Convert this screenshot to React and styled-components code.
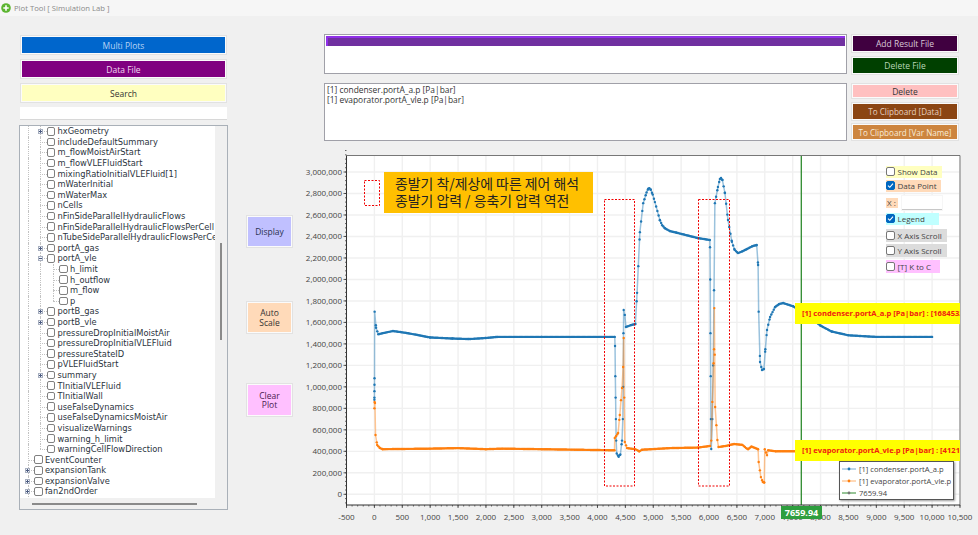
import React from 'react'
import styled, { createGlobalStyle } from 'styled-components'

const GlobalStyle = createGlobalStyle`
    html, body {
        margin: 0;
        padding: 0;
        background: #f0f0f0;
    }
    * {
        box-sizing: border-box;
    }
`

const uiFont = '"Open Sans", "Noto Sans", sans-serif'

const Page = styled.div`
    width: 978px;
    height: 535px;
    overflow: hidden;
    background: #f0f0f0;
    font-family: ${uiFont};
    font-size: 8.5px;
    color: #333;
`

const TitleBar = styled.div`
    height: 16px;
    display: flex;
    align-items: center;
    gap: 3px;
    padding-left: 1px;
    background: #f6f6f6;
    color: #8a8a8a;
    font-size: 7.7px;
`

const Content = styled.div`
    display: flex;
    padding-left: 19px;
`

const Sidebar = styled.div`
    width: 209px;
    padding-top: 20px;
    display: flex;
    flex-direction: column;
`

const FlatButton = styled.div`
    display: flex;
    align-items: center;
    justify-content: center;
    text-align: center;
    background: ${p => p.$bg};
    color: ${p => p.$fg};
    height: ${p => p.$h}px;
    border: 1px solid #fbfbfb;
    box-shadow: 0 0 0 1px #e2e2e2;
`

const SideButton = styled(FlatButton)`
    margin: 0 2px 0 2px;
    margin-bottom: ${p => p.$after}px;
    font-size: 8.5px;
`

const SearchInput = styled.div`
    height: 13px;
    margin: 0 1px 5px 1px;
    background: #fff;
    border-bottom: 1px solid #d8d8d8;
`

const TreeFrame = styled.div`
    position: relative;
    height: 385px;
    border: 1px solid #a9b0b8;
    background: #f0f0f0;
    overflow: hidden;
`

const TreeBody = styled.div`
    width: 195px;
    height: 372px;
    padding-left: 1.7px;
    background: #fff;
    overflow: hidden;
`

const TreeRowBox = styled.div`
    display: flex;
    align-items: center;
    height: 10.6px;
    white-space: nowrap;
    font-family: "DejaVu Sans", sans-serif;
    font-size: 8.3px;
    color: #2b3440;
`

const Guide = styled.span`
    position: relative;
    flex: 0 0 12.6px;
    height: 100%;
    &::before {
        content: '';
        position: absolute;
        left: 6px;
        top: 0;
        height: ${p => (p.$half ? '50%' : '100%')};
        border-left: 1px dotted #c2c2c2;
    }
    &::after {
        content: '';
        display: ${p => (p.$branch ? 'block' : 'none')};
        position: absolute;
        left: 6px;
        right: 0;
        top: 50%;
        border-top: 1px dotted #c2c2c2;
    }
`

const Toggle = styled.span`
    position: absolute;
    z-index: 1;
    left: 3.5px;
    top: 3px;
    width: 5px;
    height: 5px;
    border: 1px solid #a8b0c0;
    background: #f4f6fa;
    &::before {
        content: '';
        position: absolute;
        left: 0;
        right: 0;
        top: 1px;
        border-top: 1px solid #4a5a80;
    }
    &::after {
        content: '';
        display: ${p => (p.$open ? 'none' : 'block')};
        position: absolute;
        top: 0;
        bottom: 0;
        left: 1px;
        border-left: 1px solid #4a5a80;
    }
`

const TreeBox = styled.span`
    flex: 0 0 8.6px;
    height: 8.6px;
    margin-right: 2px;
    border: 1px solid #808080;
    border-radius: 2px;
    background: #fff;
`

const VScroll = styled.div`
    position: absolute;
    left: 199.5px;
    top: 117px;
    width: 2px;
    height: 97px;
    background: #8a8a8a;
`

const HScroll = styled.div`
    position: absolute;
    left: 12px;
    top: 377px;
    width: 165px;
    height: 2px;
    background: #8a8a8a;
`

const ActionColumn = styled.div`
    width: 45px;
    margin-left: 19px;
    padding-top: 200px;
    display: flex;
    flex-direction: column;
`

const ActionButton = styled(FlatButton)`
    margin-bottom: ${p => p.$after}px;
    font-size: 8.5px;
    line-height: 9.5px;
`

const RightColumn = styled.div`
    width: 678px;
    margin-left: 8px;
`

const TopPanel = styled.div`
    padding: 18px 0 9px 24px;
    display: flex;
    flex-direction: column;
    gap: 9px;
`

const TopRow = styled.div`
    display: flex;
    gap: 5px;
`

const ListBox = styled.div`
    width: 523px;
    height: ${p => p.$h}px;
    padding: 1px 2px;
    background: #fff;
    border: 1px solid #a0a0a8;
    font-size: 8.4px;
    line-height: 9.5px;
    color: #333;
`

const SelectedItem = styled.div`
    height: 10px;
    margin: 0 -1px;
    border-left: 2.5px solid #9030e8;
    background: linear-gradient(#9030e8 0 2px, #7030a0 2px);
`

const TopButtons = styled.div`
    width: 106px;
    display: flex;
    flex-direction: column;
    padding-top: ${p => p.$top}px;
`

const TopButton = styled(FlatButton)`
    margin-bottom: ${p => p.$after}px;
    font-size: ${p => p.$size || 8.5}px;
    white-space: nowrap;
`

const ChartArea = styled.div`
    position: relative;
    width: 678px;
    height: 385px;
`

const ChartNote = styled.div`
    position: absolute;
    left: 84px;
    top: 22px;
    width: 209px;
    height: 41px;
    padding: 3px 0 0 11px;
    background: #ffc000;
    color: #222;
    font-family: "Noto Sans CJK KR", sans-serif;
    font-size: 13.9px;
    line-height: 17px;
    white-space: nowrap;
`

const ValueTag = styled.div`
    position: absolute;
    left: 495px;
    top: ${p => p.$top}px;
    width: 165px;
    height: 21px;
    padding-left: 7px;
    overflow: hidden;
    background: #ffff00;
    color: #f02010;
    font-size: 7.6px;
    font-weight: 700;
    line-height: 21px;
    white-space: nowrap;
`

const CursorTag = styled.div`
    position: absolute;
    left: 481px;
    top: 356px;
    width: 41px;
    height: 13px;
    background: #2e9e3e;
    color: #fff;
    font-size: 9px;
    font-weight: 700;
    line-height: 13px;
    text-align: center;
`

const LegendBox = styled.div`
    position: absolute;
    left: 539px;
    top: 311px;
    width: 115px;
    height: 39px;
    padding: 1px 0 0 2px;
    display: flex;
    flex-direction: column;
    justify-content: space-around;
    background: #fff;
    border: 1px solid #555;
    box-shadow: 1px 1px 2px #999;
    font-size: 7.6px;
    color: #444;
`

const LegendItem = styled.div`
    display: flex;
    align-items: center;
    gap: 3px;
    white-space: nowrap;
`

const OptionPanel = styled.div`
    position: absolute;
    left: 585.5px;
    top: 15.5px;
    display: flex;
    flex-direction: column;
    align-items: flex-start;
    font-size: 8px;
    color: #444;
`

const OptionRow = styled.div`
    display: flex;
    align-items: center;
    gap: 3px;
    width: ${p => p.$w}px;
    height: ${p => p.$h || 12}px;
    margin-bottom: ${p => p.$after}px;
    background: ${p => p.$bg};
    white-space: nowrap;
`

const OptionBox = styled.span`
    flex: 0 0 9px;
    height: 9px;
    border: 1px solid ${p => (p.$on ? '#0067c0' : '#777')};
    border-radius: 2px;
    background: ${p => (p.$on ? '#0067c0' : '#fff')};
    display: flex;
    align-items: center;
    justify-content: center;
`

const XRow = styled.div`
    display: flex;
    align-items: center;
    gap: 4px;
    margin-bottom: 3px;
`

const XLabel = styled.span`
    width: 12px;
    height: 10px;
    background: #ffdab9;
    line-height: 10px;
    text-align: center;
`

const XInput = styled.div`
    width: 40px;
    height: 14px;
    background: #fff;
    border-bottom: 1px solid #c8c8c8;
    box-shadow: 0 0 0 1px #f6f6f6;
`

// chart scales, page coordinates minus chart origin (300, 150)
const plot = { left: 46.5, top: 5.5, right: 660, bottom: 355 }
const sx = t => 74.4 + t * 0.05577
const sy = v => 344.3 - v * 1.0743e-4

const condenser = [
    [0, 880000], [0.5, 900000], [1, 960000], [1.5, 1020000], [2, 1080000], [4, 1700000], [30, 1550000], [70, 1490000],
    [150, 1500000], [333, 1520000], [600, 1500000], [1000, 1460000], [1400, 1450000], [1700, 1445000], [2000, 1455000],
    [2200, 1465000], [3000, 1465000], [4310, 1465000], [4315, 1380000], [4320, 1100000], [4325, 900000], [4330, 700000],
    [4335, 500000], [4345, 380000], [4380, 350000], [4410, 370000], [4440, 500000], [4455, 700000],
    [4462, 1000000], [4466, 1500000], [4470, 1715000], [4490, 1670000], [4510, 1557000], [4600, 1575000],
    [4680, 1585000], [4710, 1875000], [4760, 2440000], [4820, 2710000], [4880, 2810000], [4910, 2845000], [4930, 2850000],
    [4955, 2835000], [4990, 2790000], [5030, 2720000], [5120, 2550000], [5160, 2505000], [5210, 2476000], [5300, 2450000],
    [5420, 2435000], [5800, 2385000], [6015, 2367000], [6018, 2300000], [6022, 2000000], [6026, 1500000], [6030, 1100000],
    [6034, 700000], [6040, 421000], [6060, 700000], [6075, 1200000], [6090, 1900000], [6105, 2710000], [6160, 2860000],
    [6195, 2935000], [6215, 2945000], [6240, 2925000], [6285, 2805000], [6340, 2553000], [6410, 2350000], [6460, 2275000],
    [6520, 2245000], [6600, 2262000], [6680, 2283000], [6780, 2310000], [6855, 2320000], [6880, 2135000], [6890, 1700000],
    [6915, 1232000], [6950, 1157000], [6985, 1166000], [7010, 1350000], [7040, 1530000], [7095, 1650000], [7185, 1744000],
    [7260, 1772000], [7330, 1780000], [7510, 1750000], [7800, 1650000], [8000, 1570000], [8200, 1515000], [8500, 1480000],
    [9000, 1465000], [10000, 1465000],
]

const evaporator = [
    [0, 800000], [3, 860000], [10, 850000], [20, 552000], [50, 459000], [100, 430000], [150, 420000],
    [1000, 425000], [1500, 430000], [2000, 420000], [2300, 425000], [3000, 420000], [4000, 412000],
    [4305, 410000], [4310, 524000], [4370, 570000], [4400, 738000], [4440, 990000], [4460, 1185000],
    [4470, 1455000], [4480, 900000], [4490, 487000], [4530, 430000], [4680, 420000], [4750, 400000],
    [4800, 415000], [5300, 430000], [5800, 435000], [6020, 450000], [6040, 500000], [6060, 860000],
    [6090, 1350000], [6095, 1733000], [6102, 1300000], [6110, 813000], [6150, 505000], [6170, 440000],
    [6300, 450000], [6450, 468000], [6600, 460000], [6665, 430000], [6700, 420000], [6760, 445000],
    [6880, 420000], [6890, 300000], [6930, 160000], [6965, 115000], [6990, 110000], [7000, 420000],
    [7040, 365000], [7060, 410000], [7200, 400000], [10000, 410000],
]

// markers every `step` of time along a polyline, plus the vertices
const sample = (points, step) => {
    const out = []
    for (let i = 0; i < points.length - 1; i++) {
        const [t0, v0] = points[i]
        const [t1, v1] = points[i + 1]
        out.push([t0, v0])
        for (let t = t0 + step; t < t1; t += step) {
            out.push([t, v0 + (v1 - v0) * (t - t0) / (t1 - t0)])
        }
    }
    out.push(points[points.length - 1])
    return out
}

const toPath = points => points.map(([t, v]) => `${sx(t).toFixed(2)},${sy(v).toFixed(2)}`).join(' ')
const fmt = n => n.toLocaleString('en-US')
const range = (from, to, step) => {
    const out = []
    for (let v = from; v <= to; v += step) out.push(v)
    return out
}

const xMajor = range(-500, 10500, 500)
const xMinor = range(-500, 10500, 100)
const yMajor = range(0, 3000000, 200000)
const yMinor = range(-80000, 3200000, 40000)

const Series = ({ points, color }) => (
    <g>
        <polyline points={toPath(points)} fill="none" stroke={color} strokeOpacity="0.45" strokeWidth="1.5" />
        {sample(points, 22).map(([t, v], i) => (
            <circle key={i} cx={sx(t)} cy={sy(v)} r="1.2" fill={color} />
        ))}
    </g>
)

const NoteFrame = ({ x, y, w, h }) => (
    <rect x={x} y={y} width={w} height={h} fill="none" stroke="#f00000" strokeWidth="1" strokeDasharray="2 1.5" />
)

const Chart = () => (
    <svg width="678" height="385" style={{ display: 'block' }}>
        <rect x={plot.left} y={plot.top} width={plot.right - plot.left} height={plot.bottom - plot.top} fill="#fff" />
        {xMajor.map(t => (
            <line key={t} x1={sx(t)} x2={sx(t)} y1={plot.top} y2={plot.bottom} stroke="#f0f0f0" strokeWidth="1.4" />
        ))}
        {yMajor.map(v => (
            <line key={v} x1={plot.left} x2={plot.right} y1={sy(v)} y2={sy(v)} stroke="#f0f0f0" strokeWidth="1.4" />
        ))}
        <defs>
            <clipPath id="plot-clip">
                <rect x={plot.left} y={plot.top} width={plot.right - plot.left} height={plot.bottom - plot.top} />
            </clipPath>
        </defs>
        <g clipPath="url(#plot-clip)">
            <Series points={condenser} color="#1f77b4" />
            <Series points={evaporator} color="#ff7f0e" />
        </g>
        <line x1="501.3" x2="501.3" y1={plot.top} y2={plot.bottom} stroke="#2e8b2e" strokeWidth="1.3" />
        <NoteFrame x={64.5} y={30.5} w={15} h={25} />
        <NoteFrame x={304.5} y={49.5} w={30} h={286.5} />
        <NoteFrame x={398.5} y={49.5} w={31} h={286.5} />

        <path d={`M${plot.left} ${plot.top}H${plot.right}V${plot.bottom}`} fill="none" stroke="#777" strokeWidth="1" />
        <path d={`M${plot.left} ${plot.top}V${plot.bottom}H${plot.right}`} fill="none" stroke="#333" strokeWidth="1" />
        {xMinor.map(t => (
            <line key={t} x1={sx(t)} x2={sx(t)} y1={plot.bottom} y2={plot.bottom + 1.5} stroke="#444" strokeWidth="0.8" />
        ))}
        {xMajor.map(t => (
            <g key={t}>
                <line x1={sx(t)} x2={sx(t)} y1={plot.bottom} y2={plot.bottom + 3} stroke="#333" strokeWidth="0.8" />
                <text x={sx(t)} y={370} textAnchor="middle" fontSize="8" fill="#444">{fmt(t)}</text>
            </g>
        ))}
        {yMinor.map(v => (
            <line key={v} x1={plot.left - 1.5} x2={plot.left} y1={sy(v)} y2={sy(v)} stroke="#444" strokeWidth="0.8" />
        ))}
        {yMajor.map(v => (
            <g key={v}>
                <line x1={plot.left - 3} x2={plot.left} y1={sy(v)} y2={sy(v)} stroke="#333" strokeWidth="0.8" />
                <text x={42} y={sy(v) + 3} textAnchor="end" fontSize="8" fill="#444">{fmt(v)}</text>
            </g>
        ))}
    </svg>
)

const LegendMark = ({ color, dot }) => (
    <svg width="14" height="6">
        <line x1="0" x2="14" y1="3" y2="3" stroke={color} strokeOpacity={dot ? 1 : 0.6} strokeWidth="1" />
        <circle cx="7" cy="3" r="1.4" fill={dot || color} />
    </svg>
)

const TreeRow = ({ level, label, toggle, lastChild }) => (
    <TreeRowBox>
        {level > 0 && <Guide />}
        {level > 1 && <Guide />}
        <Guide $branch $half={lastChild}>
            {toggle && <Toggle $open={toggle === 'open'} />}
        </Guide>
        <TreeBox />
        <span>{label}</span>
    </TreeRowBox>
)

const treeRows = [
    { level: 1, label: 'hxGeometry', toggle: 'closed' },
    { level: 1, label: 'includeDefaultSummary' },
    { level: 1, label: 'm_flowMoistAirStart' },
    { level: 1, label: 'm_flowVLEFluidStart' },
    { level: 1, label: 'mixingRatioInitialVLEFluid[1]' },
    { level: 1, label: 'mWaterInitial' },
    { level: 1, label: 'mWaterMax' },
    { level: 1, label: 'nCells' },
    { level: 1, label: 'nFinSideParallelHydraulicFlows' },
    { level: 1, label: 'nFinSideParallelHydraulicFlowsPerCell' },
    { level: 1, label: 'nTubeSideParallelHydraulicFlowsPerCell' },
    { level: 1, label: 'portA_gas', toggle: 'closed' },
    { level: 1, label: 'portA_vle', toggle: 'open' },
    { level: 2, label: 'h_limit' },
    { level: 2, label: 'h_outflow' },
    { level: 2, label: 'm_flow' },
    { level: 2, label: 'p', lastChild: true },
    { level: 1, label: 'portB_gas', toggle: 'closed' },
    { level: 1, label: 'portB_vle', toggle: 'closed' },
    { level: 1, label: 'pressureDropInitialMoistAir' },
    { level: 1, label: 'pressureDropInitialVLEFluid' },
    { level: 1, label: 'pressureStateID' },
    { level: 1, label: 'pVLEFluidStart' },
    { level: 1, label: 'summary', toggle: 'closed' },
    { level: 1, label: 'TInitialVLEFluid' },
    { level: 1, label: 'TInitialWall' },
    { level: 1, label: 'useFalseDynamics' },
    { level: 1, label: 'useFalseDynamicsMoistAir' },
    { level: 1, label: 'visualizeWarnings' },
    { level: 1, label: 'warning_h_limit' },
    { level: 1, label: 'warningCellFlowDirection', lastChild: true },
    { level: 0, label: 'EventCounter' },
    { level: 0, label: 'expansionTank', toggle: 'closed' },
    { level: 0, label: 'expansionValve', toggle: 'closed' },
    { level: 0, label: 'fan2ndOrder', toggle: 'closed' },
]

const Tick = () => (
    <svg width="7" height="7" viewBox="0 0 7 7">
        <path d="M1 3.6 L2.8 5.3 L6 1.7" fill="none" stroke="#fff" strokeWidth="1.1" />
    </svg>
)

const options = [
    { label: 'Show Data', w: 56, bg: '#ffffc0', after: 2 },
    { label: 'Data Point', w: 55, bg: '#ffdab9', on: true, after: 4 },
]

const options2 = [
    { label: 'Legend', w: 53, bg: '#c0ffff', h: 12.5, on: true, after: 4 },
    { label: 'X Axis Scroll', w: 61, bg: '#dcdcdc', h: 13, after: 2.3 },
    { label: 'Y Axis Scroll', w: 61, bg: '#dcdcdc', h: 13, after: 3 },
    { label: '[T] K to C', w: 54, bg: '#ffc0ff', h: 12.5 },
]

const App = () => (
    <Page>
        <GlobalStyle />
        <TitleBar>
            <svg width="10" height="10" viewBox="0 0 10 10">
                <circle cx="5" cy="5" r="4.8" fill="#5cb531" />
                <path d="M5 2.3V7.7M2.3 5H7.7" stroke="#fff" strokeWidth="1.6" />
            </svg>
            Plot Tool [ Simulation Lab ]
        </TitleBar>
        <Content>
            <Sidebar>
                <SideButton $bg="#0066cc" $fg="#b8d4f4" $h={18} $after={6}>Multi Plots</SideButton>
                <SideButton $bg="#800080" $fg="#f0d8f0" $h={18} $after={6}>Data File</SideButton>
                <SideButton $bg="#ffffc0" $fg="#333" $h={18} $after={5}>Search</SideButton>
                <SearchInput />
                <TreeFrame>
                    <TreeBody>
                        {treeRows.map(row => <TreeRow key={row.label} {...row} />)}
                    </TreeBody>
                    <VScroll />
                    <HScroll />
                </TreeFrame>
            </Sidebar>
            <ActionColumn>
                <ActionButton $bg="#c0c0ff" $fg="#2a3050" $h={31} $after={55}>Display</ActionButton>
                <ActionButton $bg="#ffdab9" $fg="#333" $h={31} $after={51}>Auto<br />Scale</ActionButton>
                <ActionButton $bg="#ffc0ff" $fg="#4a2050" $h={32} $after={0}>Clear<br />Plot</ActionButton>
            </ActionColumn>
            <RightColumn>
                <TopPanel>
                    <TopRow>
                        <ListBox $h={40}>
                            <SelectedItem />
                        </ListBox>
                        <TopButtons $top={1}>
                            <TopButton $bg="#400040" $fg="#d8c8d8" $h={17} $after={5}>Add Result File</TopButton>
                            <TopButton $bg="#004000" $fg="#b8d8b8" $h={17} $after={0}>Delete File</TopButton>
                        </TopButtons>
                    </TopRow>
                    <TopRow>
                        <ListBox $h={58}>
                            <div>[1] condenser.portA_a.p [Pa|bar]</div>
                            <div>[1] evaporator.portA_vle.p [Pa|bar]</div>
                        </ListBox>
                        <TopButtons $top={1}>
                            <TopButton $bg="#ffc0c0" $fg="#333" $h={14} $after={5}>Delete</TopButton>
                            <TopButton $bg="#8b4513" $fg="#e8d0c0" $h={17} $after={4} $size={8.1}>To Clipboard [Data]</TopButton>
                            <TopButton $bg="#cd853f" $fg="#f8ecd8" $h={16} $after={0} $size={8.1}>To Clipboard [Var Name]</TopButton>
                        </TopButtons>
                    </TopRow>
                </TopPanel>
                <ChartArea>
                    <Chart />
                    <ChartNote>
                        <div>종발기 착/제상에 따른 제어 해석</div>
                        <div>종발기 압력 / 응축기 압력 역전</div>
                    </ChartNote>
                    <ValueTag $top={153}>[1] condenser.portA_a.p [Pa|bar] : [1684532.5]</ValueTag>
                    <ValueTag $top={290}>[1] evaporator.portA_vle.p [Pa|bar] : [412134.2]</ValueTag>
                    <CursorTag>7659.94</CursorTag>
                    <LegendBox>
                        <LegendItem><LegendMark color="#1f77b4" />[1] condenser.portA_a.p</LegendItem>
                        <LegendItem><LegendMark color="#ff7f0e" />[1] evaporator.portA_vle.p</LegendItem>
                        <LegendItem><LegendMark color="#2e8b2e" dot="#777" />7659.94</LegendItem>
                    </LegendBox>
                    <OptionPanel>
                        {options.map(o => (
                            <OptionRow key={o.label} $w={o.w} $bg={o.bg} $after={o.after}>
                                <OptionBox $on={o.on}>{o.on && <Tick />}</OptionBox>
                                {o.label}
                            </OptionRow>
                        ))}
                        <XRow>
                            <XLabel>X :</XLabel>
                            <XInput />
                        </XRow>
                        {options2.map(o => (
                            <OptionRow key={o.label} $w={o.w} $bg={o.bg} $h={o.h} $after={o.after}>
                                <OptionBox $on={o.on}>{o.on && <Tick />}</OptionBox>
                                {o.label}
                            </OptionRow>
                        ))}
                    </OptionPanel>
                </ChartArea>
            </RightColumn>
        </Content>
    </Page>
)

export default App
